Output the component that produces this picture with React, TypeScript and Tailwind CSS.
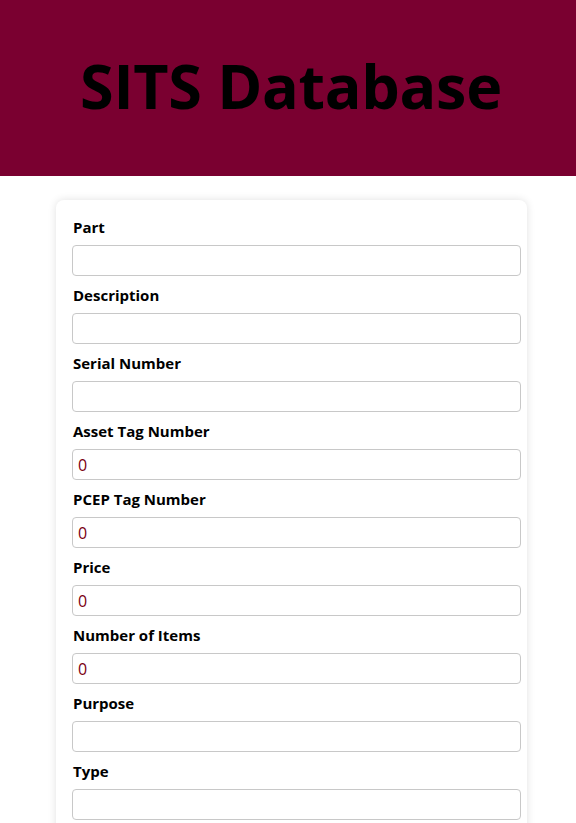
import React from 'react';

const fields: { label: string; value: string }[] = [
    { label: 'Part', value: '' },
    { label: 'Description', value: '' },
    { label: 'Serial Number', value: '' },
    { label: 'Asset Tag Number', value: '0' },
    { label: 'PCEP Tag Number', value: '0' },
    { label: 'Price', value: '0' },
    { label: 'Number of Items', value: '0' },
    { label: 'Purpose', value: '' },
    { label: 'Type', value: '' },
];

export default function App() {
    return (
        <div className="min-h-screen bg-white text-black" style={{ fontFamily: '"Open Sans", "Noto Sans", sans-serif' }}>
            {/* Header */}
            <header className="h-[176px] bg-[#7a0030] flex items-center justify-center">
                <h1 className="text-[61px] font-bold leading-none tracking-[-0.3px] pb-[6px] pl-[6px]">SITS Database</h1>
            </header>

            {/* Form card */}
            <div className="pt-[24px] pl-[56px]">
                <form className="w-[471px] bg-white rounded-lg shadow-[0_0_8px_rgba(0,0,0,0.12)] pl-[16px] pr-[6px] pt-[17px] pb-6">
                    {fields.map(f => (
                        <div key={f.label} className="mb-[9px]">
                            <label className="block text-[15px] font-bold leading-[20px] pl-[1px] mb-[8px]">{f.label}</label>
                            <input
                                type="text"
                                defaultValue={f.value}
                                className="block w-[449px] h-[31px] border border-[#c8c8c8] rounded-[4px] px-[5px] text-[16px] text-[#7a0010] outline-none"
                            />
                        </div>
                    ))}
                </form>
            </div>
        </div>
    );
}
